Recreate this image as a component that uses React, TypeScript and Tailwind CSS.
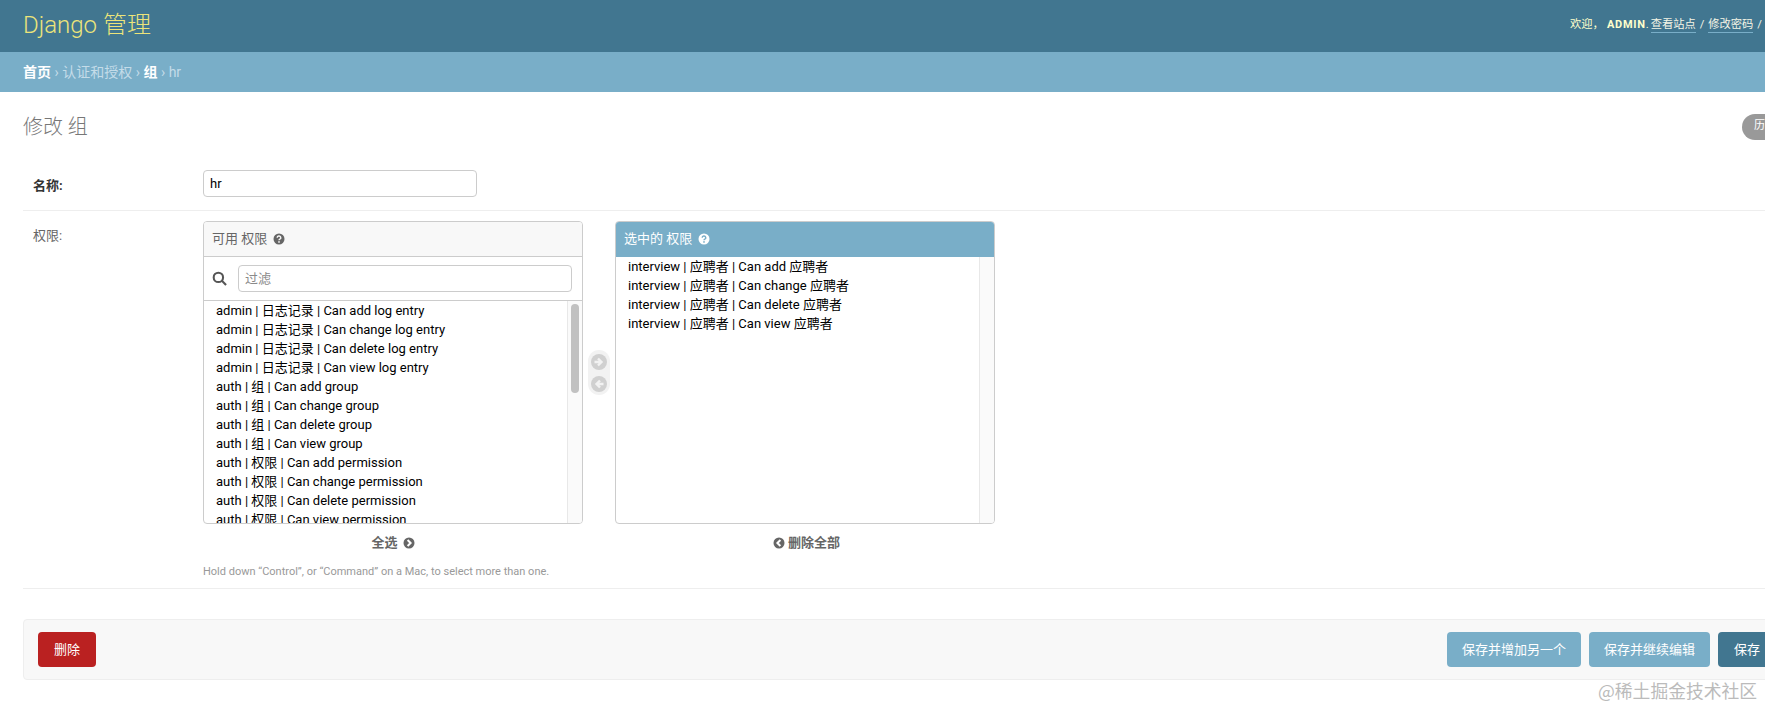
const font = '[font-family:Roboto,"Noto_Sans_CJK_SC",sans-serif]';

const available = [
  'admin | 日志记录 | Can add log entry',
  'admin | 日志记录 | Can change log entry',
  'admin | 日志记录 | Can delete log entry',
  'admin | 日志记录 | Can view log entry',
  'auth | 组 | Can add group',
  'auth | 组 | Can change group',
  'auth | 组 | Can delete group',
  'auth | 组 | Can view group',
  'auth | 权限 | Can add permission',
  'auth | 权限 | Can change permission',
  'auth | 权限 | Can delete permission',
  'auth | 权限 | Can view permission',
];

const chosen = [
  'interview | 应聘者 | Can add 应聘者',
  'interview | 应聘者 | Can change 应聘者',
  'interview | 应聘者 | Can delete 应聘者',
  'interview | 应聘者 | Can view 应聘者',
];

// round icons from the django admin selector sprite
const HelpIcon = ({ color, mark }: { color: string; mark: string }) => (
  <svg viewBox="0 0 12 12" className="ml-[6px] h-[12px] w-[12px]">
    <circle cx="6" cy="6" r="5.5" fill={color} />
    <path d="M4.2 4.7a1.8 1.7 0 1 1 2.6 1.5c-.6.3-.8.6-.8 1.1" fill="none" stroke={mark} strokeWidth="1.4" />
    <rect x="5.2" y="8.2" width="1.6" height="1.5" fill={mark} />
  </svg>
);

const ArrowIcon = ({ dir }: { dir: 'left' | 'right' }) => (
  <svg viewBox="0 0 16 16" className="h-[16px] w-[16px]">
    <circle cx="8" cy="8" r="8" fill="#d0d0d0" />
    {dir === 'right' ? (
      <path d="M3.5 8h6M7 4.5 10.5 8 7 11.5" fill="none" stroke="#f2f2f2" strokeWidth="2.4" />
    ) : (
      <path d="M12.5 8h-6M9 4.5 5.5 8 9 11.5" fill="none" stroke="#f2f2f2" strokeWidth="2.4" />
    )}
  </svg>
);

const Chevron = ({ dir }: { dir: 'left' | 'right' }) => (
  <svg viewBox="0 0 12 12" className="h-[12px] w-[12px]">
    <circle cx="6" cy="6" r="5.5" fill="#666" />
    {dir === 'right' ? (
      <path d="M4.6 3 7.6 6l-3 3" fill="none" stroke="#fff" strokeWidth="2" />
    ) : (
      <path d="M7.4 3 4.4 6l3 3" fill="none" stroke="#fff" strokeWidth="2" />
    )}
  </svg>
);

const Sep = () => <span className="mx-[3.5px] text-[#c4dce8]">›</span>;

export default function App() {
  return (
    <div className={`relative h-[707px] w-[1765px] overflow-hidden bg-white text-[#333] ${font}`}>
      {/* Header */}
      <header className="flex h-[52px] w-[1765px] items-center justify-between bg-[#417690] pl-[23px]">
        <h1 className="mb-[2px] text-[24px] font-light text-[#ece47a]">Django 管理</h1>
        <div className="mb-[1px] mr-[3px] flex items-baseline whitespace-nowrap text-[11.25px] text-[#ffc]">
          <span className="w-[37px]">欢迎，</span>
          <strong className="text-[11px] font-bold tracking-[0.7px]">ADMIN</strong>
          <span className="w-[5px]">.</span>
          <span className="border-b border-[#79aec8] leading-[14px] text-[#f5f5e6]">查看站点</span>
          <span className="mx-[4px] text-[#f5f5e6]">/</span>
          <span className="border-b border-[#79aec8] leading-[14px] text-[#f5f5e6]">修改密码</span>
          <span className="ml-[4px] text-[#f5f5e6]">/</span>
        </div>
      </header>

      {/* Breadcrumbs */}
      <nav className="flex h-[40px] items-center bg-[#79aec8] pl-[23px] text-[14px] text-[#c4dce8]">
        <span className="font-bold text-white">首页</span>
        <Sep />
        <span>认证和授权</span>
        <Sep />
        <span className="font-bold text-white">组</span>
        <Sep />
        <span>hr</span>
      </nav>

      <main className="w-[1800px] pl-[23px]">
        <div className="flex h-[68px] items-center justify-between pt-[1px]">
          <h2 className="text-[20px] font-light text-[#777]">修改 组</h2>
          <div className="mr-[-4px] flex h-[26px] w-[62px] items-center rounded-[15px] bg-[#999] pl-[12px] text-[11px] text-white">
            历史
          </div>
        </div>

        {/* Name row */}
        <div className="mt-[10px] flex h-[41px] border-b border-[#eee]">
          <label className="w-[180px] pl-[10px] pt-[5px] text-[13px] font-bold leading-[22px]">名称:</label>
          <div className="flex h-[27px] w-[274px] items-center rounded-[4px] border border-[#ccc] pl-[6px] text-[13px] text-black">
            hr
          </div>
        </div>

        {/* Permissions row */}
        <div className="flex h-[378px] border-b border-[#eee] pt-[10px]">
          <label className="w-[180px] pl-[10px] pt-[4px] text-[13px] leading-[22px] text-[#666]">权限:</label>
          <div>
            <div className="flex">
              {/* Available */}
              <div className="w-[380px]">
                <div className="flex h-[303px] flex-col overflow-hidden rounded-[4px] border border-[#ccc]">
                  <div className="flex h-[35px] shrink-0 items-center border-b border-[#ccc] bg-[#f8f8f8] pl-[8px] text-[13px] text-[#666]">
                    可用 权限
                    <HelpIcon color="#666" mark="#f8f8f8" />
                  </div>
                  <div className="flex h-[44px] shrink-0 items-center border-b border-[#ccc] pl-[8px]">
                    <svg viewBox="0 0 16 16" className="mr-[11px] h-[15px] w-[15px]" fill="none" stroke="#555" strokeWidth="2.2">
                      <circle cx="6.8" cy="6.8" r="5" />
                      <path d="m10.5 10.5 4.5 4.5" />
                    </svg>
                    <div className="flex h-[27px] w-[334px] items-center rounded-[4px] border border-[#ccc] pl-[6px] text-[13px] text-[#8a8a8a]">
                      过滤
                    </div>
                  </div>
                  <div className="flex min-h-0 flex-1">
                    <ul className="flex-1 overflow-hidden pl-[12px] text-[13px] leading-[19px] text-black">
                      {available.map((item) => (
                        <li key={item} className="whitespace-nowrap">{item}</li>
                      ))}
                    </ul>
                    <div className="w-[15px] border-l border-[#e8e8e8] bg-[#fafafa] px-[3px] pt-[3px]">
                      <div className="h-[89px] rounded-full bg-[#c1c1c1]" />
                    </div>
                  </div>
                </div>
                <div className="mt-[9px] flex items-center justify-center gap-[5px] text-[13px] font-bold text-[#666]">
                  全选
                  <Chevron dir="right" />
                </div>
              </div>

              {/* Move buttons */}
              <div className="mx-[5px] mt-[129px] flex h-[45px] w-[22px] flex-col items-center justify-center gap-[6px] rounded-[11px] bg-[#f2f2f2]">
                <ArrowIcon dir="right" />
                <ArrowIcon dir="left" />
              </div>

              {/* Chosen */}
              <div className="w-[380px]">
                <div className="flex h-[303px] flex-col overflow-hidden rounded-[4px] border border-[#ccc]">
                  <div className="-mx-px -mt-px flex h-[36px] shrink-0 items-center bg-[#79aec8] pl-[9px] text-[13px] text-white">
                    选中的 权限
                    <HelpIcon color="#fff" mark="#79aec8" />
                  </div>
                  <div className="flex min-h-0 flex-1">
                    <ul className="flex-1 pl-[12px] text-[13px] leading-[19px] text-black">
                      {chosen.map((item) => (
                        <li key={item} className="whitespace-nowrap">{item}</li>
                      ))}
                    </ul>
                    <div className="w-[15px] border-l border-[#e8e8e8] bg-[#fafafa]" />
                  </div>
                </div>
                <div className="mt-[9px] flex items-center justify-center gap-[3px] pl-[3px] text-[13px] font-bold text-[#666]">
                  <Chevron dir="left" />
                  删除全部
                </div>
              </div>
            </div>
            <p className="mt-[11px] text-[11px] text-[#999]">
              Hold down “Control”, or “Command” on a Mac, to select more than one.
            </p>
          </div>
        </div>

        {/* Submit row */}
        <div className="mt-[30px] flex h-[61px] items-center justify-between rounded-[4px] border border-[#eee] bg-[#f8f8f8] pl-[14px]">
          <div className="flex h-[35px] w-[58px] items-center justify-center rounded-[4px] bg-[#ba2121] text-[13px] text-white">
            删除
          </div>
          <div className="flex gap-[8px] pr-[23px] text-[13px] text-white">
            <div className="flex h-[35px] w-[134px] items-center justify-center rounded-[4px] bg-[#79aec8]">保存并增加另一个</div>
            <div className="flex h-[35px] w-[121px] items-center justify-center rounded-[4px] bg-[#79aec8]">保存并继续编辑</div>
            <div className="flex h-[35px] w-[58px] items-center justify-center rounded-[4px] bg-[#417690]">保存</div>
          </div>
        </div>
      </main>

      {/* Watermark */}
      <div className="absolute left-[1598px] top-[677px] whitespace-nowrap text-[17.8px] text-[#bbb] [font-family:'Noto_Sans_CJK_SC',serif]">
        @稀土掘金技术社区
      </div>
    </div>
  );
}
